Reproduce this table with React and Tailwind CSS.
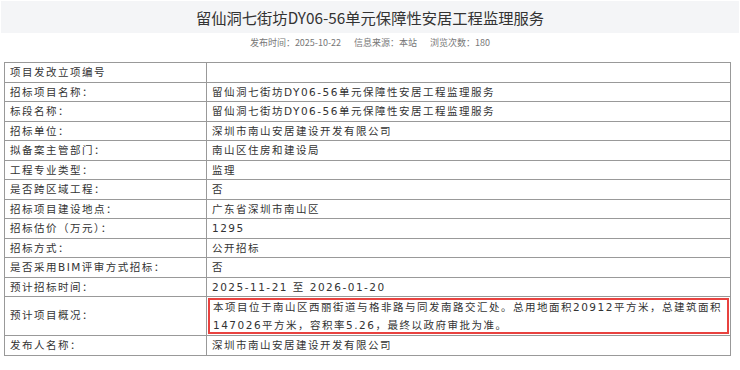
import React from 'react';

const ROWS = [
  ['项目发改立项编号', ''],
  ['招标项目名称：', '留仙洞七街坊DY06-56单元保障性安居工程监理服务'],
  ['标段名称：', '留仙洞七街坊DY06-56单元保障性安居工程监理服务'],
  ['招标单位：', '深圳市南山安居建设开发有限公司'],
  ['拟备案主管部门：', '南山区住房和建设局'],
  ['工程专业类型：', '监理'],
  ['是否跨区域工程：', '否'],
  ['招标项目建设地点：', '广东省深圳市南山区'],
  ['招标估价（万元）：', '1295'],
  ['招标方式：', '公开招标'],
  ['是否采用BIM评审方式招标：', '否'],
  ['预计招标时间：', '2025-11-21 至 2026-01-20'],
];

const FONT = { fontFamily: '"Noto Sans CJK SC", "Noto Sans", sans-serif' };
const TABLE_FONT = { fontFamily: '"DejaVu Sans", "Noto Sans CJK SC", sans-serif' };

export default function App() {
  return (
    <div className="w-[740px] h-[370px] bg-white text-[#333] overflow-hidden" style={FONT}>
      {/* 标题 */}
      <div className="mx-[1px] mt-[1px] h-[32px] bg-[#f4f5f7] flex items-center justify-center">
        <h1 className="text-[15.3px] text-[#333] font-normal">留仙洞七街坊DY06-56单元保障性安居工程监理服务</h1>
      </div>
      <div className="h-[20px] flex items-center justify-center gap-[13px] text-[9px] text-[#777]">
        <span>发布时间：2025-10-22</span>
        <span>信息来源：本站</span>
        <span>浏览次数：180</span>
      </div>

      {/* 表格 */}
      <div
        className="mx-[4px] mt-[9px] w-[727px] border border-[#999] text-[10.5px] tracking-[1.5px] whitespace-nowrap"
        style={TABLE_FONT}
      >
        {ROWS.map(([k, v]) => (
          <div key={k} className="flex h-[19.5px] border-b border-[#999]">
            <div className="w-[202px] shrink-0 border-r border-[#999] pl-[5px] leading-[18.5px]">{k}</div>
            <div className="flex-1 pl-[5px] leading-[18.5px]">{v}</div>
          </div>
        ))}
        <div className="flex h-[39px] border-b border-[#999]">
          <div className="w-[202px] shrink-0 border-r border-[#999] pl-[5px] flex items-center">预计项目概况：</div>
          <div className="flex-1 p-[1px]">
            <div className="h-full border-2 border-[#e8423f] pl-[3px] leading-[18px] flex flex-col justify-center">
              <span>本项目位于南山区西丽街道与格非路与同发南路交汇处。总用地面积20912平方米，总建筑面积</span>
              <span>147026平方米，容积率5.26，最终以政府审批为准。</span>
            </div>
          </div>
        </div>
        <div className="flex h-[19px]">
          <div className="w-[202px] shrink-0 border-r border-[#999] pl-[5px] leading-[18.5px]">发布人名称：</div>
          <div className="flex-1 pl-[5px] leading-[18.5px]">深圳市南山安居建设开发有限公司</div>
        </div>
      </div>
    </div>
  );
}
